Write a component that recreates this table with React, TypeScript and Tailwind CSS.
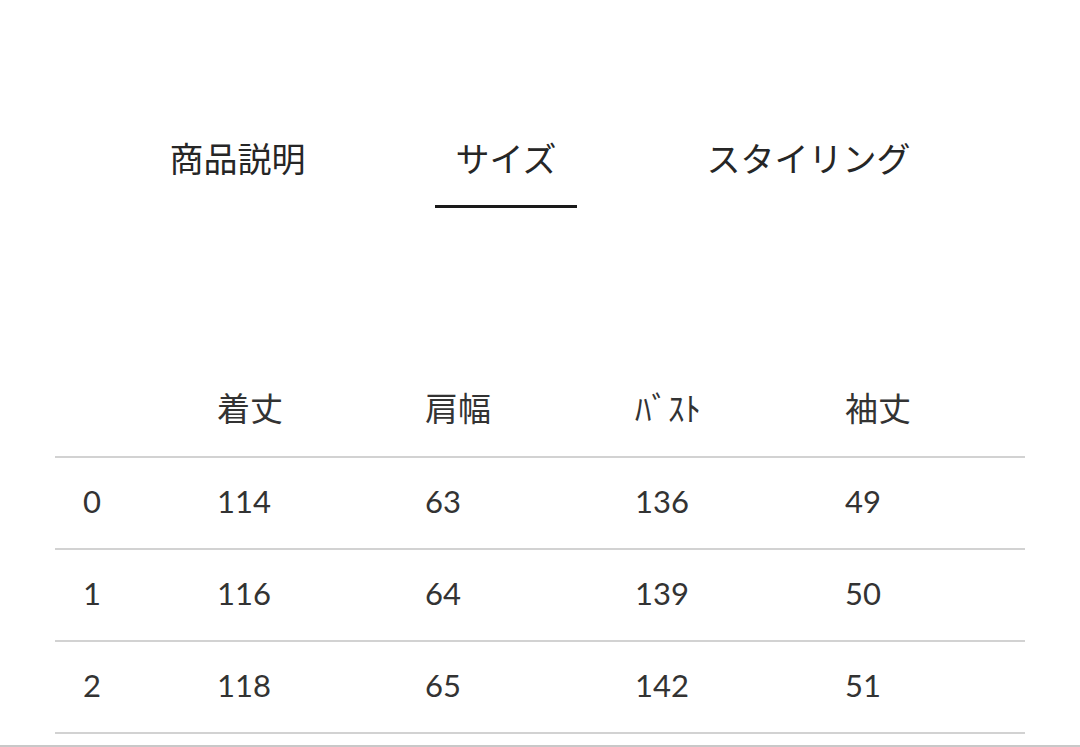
import React from "react"

const tabs = ["商品説明", "サイズ", "スタイリング"]

const headers = ["", "着丈", "肩幅", "ﾊﾞｽﾄ", "袖丈"]

const rows = [
    ["0", "114", "63", "136", "49"],
    ["1", "116", "64", "139", "50"],
    ["2", "118", "65", "142", "51"],
]

const grid = "grid grid-cols-[162px_208px_210px_210px_1fr]"

export default function App() {
    return (
        <div
            className="w-[1080px] h-[747px] bg-white overflow-hidden flex flex-col text-[#262626]"
            style={{ fontFamily: '"Noto Sans CJK JP", sans-serif' }}
        >
            {/* Tabs */}
            <div className="pt-[134px] flex justify-center gap-[108px]">
                {tabs.map((t, i) => (
                    <div
                        key={t}
                        className={`px-[21px] pb-[23px] h-[74px] text-[34px] leading-[48px] border-b-[3px] ${
                            i === 1 ? "border-[#1a1a1a]" : "border-transparent"
                        }`}
                    >
                        {t}
                    </div>
                ))}
            </div>

            {/* Size table */}
            <div className="mt-[175px] mx-[55px]">
                <div className={`${grid} pb-[25px] border-b-2 border-[#d2d2d2] text-[33px] leading-[48px] text-[#333]`}>
                    {headers.map((h, i) => (
                        <div key={i}>{h}</div>
                    ))}
                </div>
                {rows.map((r) => (
                    <div
                        key={r[0]}
                        className={`${grid} h-[92px] pb-[4px] items-center border-b-2 border-[#d2d2d2] text-[31px] text-[#333]`}
                        style={{ fontFamily: '"Lato", "Noto Sans CJK JP", sans-serif' }}
                    >
                        {r.map((c, i) => (
                            <div key={i} className={i === 0 ? "pl-[28px]" : ""}>
                                {c}
                            </div>
                        ))}
                    </div>
                ))}
            </div>

            <div className="mt-auto h-[2px] bg-[#c8c8c8]" />
        </div>
    )
}
